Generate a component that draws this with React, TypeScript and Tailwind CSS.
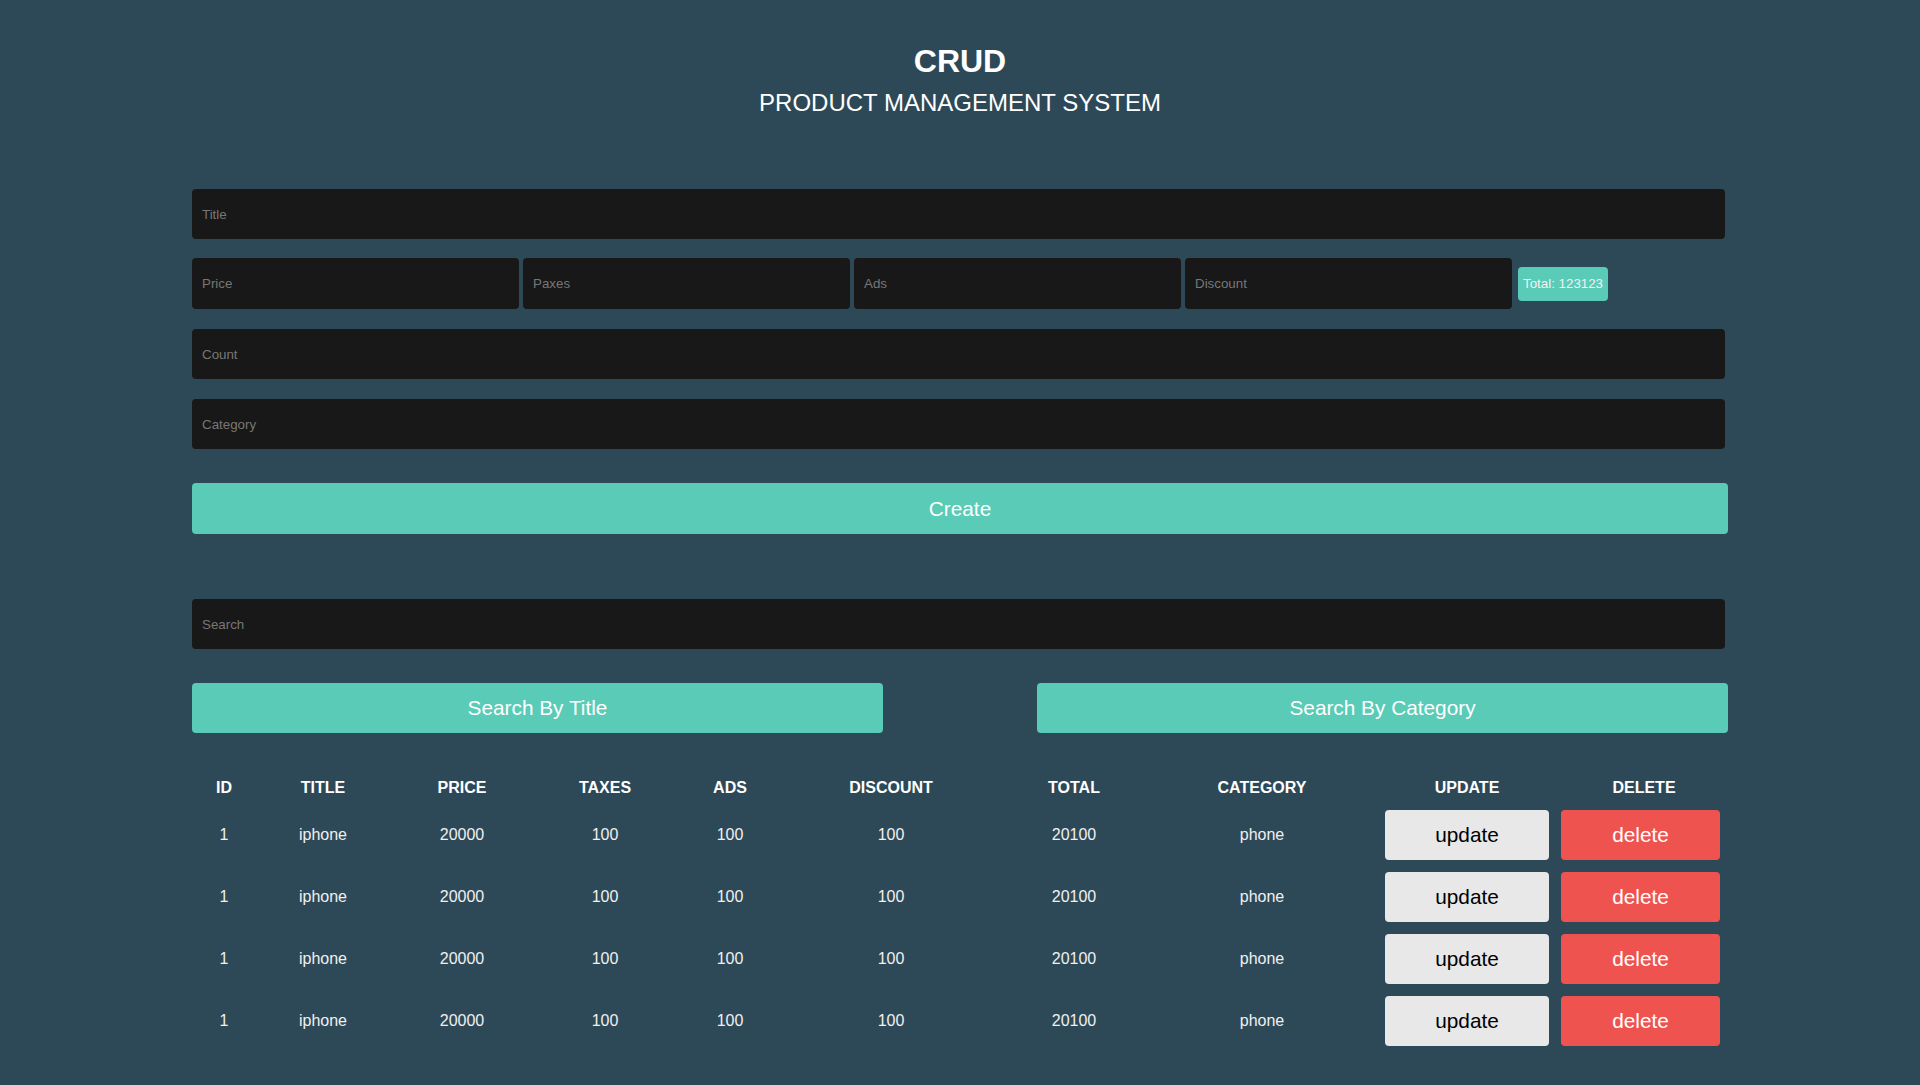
import { useState } from "react";

type Product = {
  id: number;
  title: string;
  price: number;
  taxes: number;
  ads: number;
  discount: number;
  total: number;
  category: string;
};

const rows: Product[] = [1, 2, 3, 4].map(() => ({
  id: 1,
  title: "iphone",
  price: 20000,
  taxes: 100,
  ads: 100,
  discount: 100,
  total: 20100,
  category: "phone",
}));

const cols = "grid grid-cols-[64px_134px_144px_142px_108px_214px_152px_224px_186px_168px]";

export default function App() {
  const [search, setSearch] = useState("");

  const inputCls =
    "h-[50px] rounded-[4px] bg-[#181818] px-[10px] text-[13.33px] text-white placeholder:text-[#777777] outline-none";

  return (
    <div className="min-h-screen bg-[#2d4958] text-white font-['Liberation_Sans',Arial,sans-serif]">
      <div className="w-[1536px] mx-auto pt-[43px]">
        {/* heading */}
        <div className="text-center">
          <h2 className="text-[32px] font-bold leading-[37px]">CRUD</h2>
          <p className="mt-[9px] text-[24px] leading-[28px]">PRODUCT MANAGEMENT SYSTEM</p>
        </div>

        {/* inputs */}
        <div className="mt-[72px] flex flex-col">
          <input className={`${inputCls} w-[1533px]`} placeholder="Title" />

          <div className="mt-[19px] flex items-center h-[51px]">
            <div className="flex gap-[4px]">
              <input className={`${inputCls} w-[327px] h-[51px]`} placeholder="Price" />
              <input className={`${inputCls} w-[327px] h-[51px]`} placeholder="Paxes" />
              <input className={`${inputCls} w-[327px] h-[51px]`} placeholder="Ads" />
              <input className={`${inputCls} w-[327px] h-[51px]`} placeholder="Discount" />
            </div>
            <small className="ml-[6px] h-[34px] px-[5px] flex items-center rounded-[4px] bg-[#5acbb6] text-[13.33px] text-[#f2f2f2]">
              Total: 123123
            </small>
          </div>

          <input className={`${inputCls} mt-[20px] w-[1533px]`} placeholder="Count" />
          <input className={`${inputCls} mt-[20px] w-[1533px]`} placeholder="Category" />

          <button className="mt-[34px] h-[51px] w-full rounded-[4px] bg-[#5acbb6] text-[20.8px] text-white">
            Create
          </button>
        </div>

        {/* search */}
        <div className="mt-[65px]">
          <input
            className={`${inputCls} w-[1533px]`}
            placeholder="Search"
            value={search}
            onChange={(e) => setSearch(e.target.value)}
          />
          <div className="mt-[34px] flex justify-between">
            <button className="h-[50px] w-[691px] rounded-[4px] bg-[#5acbb6] text-[20.8px] text-white">
              Search By Title
            </button>
            <button className="h-[50px] w-[691px] rounded-[4px] bg-[#5acbb6] text-[20.8px] text-white">
              Search By Category
            </button>
          </div>
        </div>

        {/* table */}
        <div className="mt-[33px] text-center">
          <div className={`${cols} h-[44px] items-center text-[16px] font-bold`}>
            <div>ID</div>
            <div>TITLE</div>
            <div>PRICE</div>
            <div>TAXES</div>
            <div>ADS</div>
            <div>DISCOUNT</div>
            <div>TOTAL</div>
            <div>CATEGORY</div>
            <div>UPDATE</div>
            <div>DELETE</div>
          </div>
          <div className="flex flex-col gap-y-[12px]">
            {rows.map((r, i) => (
              <div key={i} className={`${cols} h-[50px] items-center text-[16px] text-[#f0f0f0]`}>
                <div>{r.id}</div>
                <div>{r.title}</div>
                <div>{r.price}</div>
                <div>{r.taxes}</div>
                <div>{r.ads}</div>
                <div>{r.discount}</div>
                <div>{r.total}</div>
                <div>{r.category}</div>
                <div className="flex justify-center">
                  <button className="h-[50px] w-[164px] rounded-[4px] bg-[#e8e8e8] text-[20.8px] text-black">
                    update
                  </button>
                </div>
                <div className="flex justify-start pl-[1px]">
                  <button className="h-[50px] w-[159px] rounded-[4px] bg-[#ef5350] text-[20.8px] text-white">
                    delete
                  </button>
                </div>
              </div>
            ))}
          </div>
        </div>
      </div>
    </div>
  );
}
